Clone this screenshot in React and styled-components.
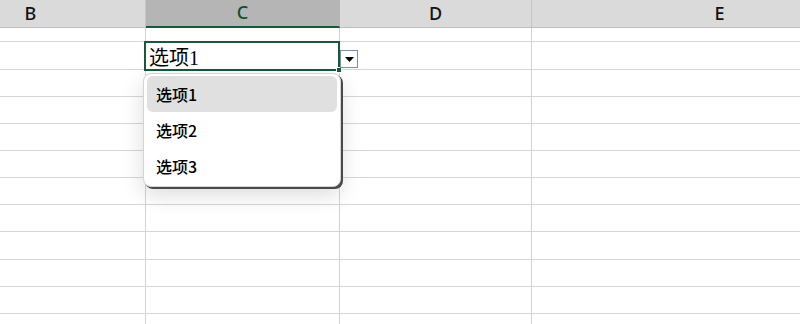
import React from 'react'
import styled, { createGlobalStyle } from 'styled-components'

const GlobalStyle = createGlobalStyle`
  html, body {
    margin: 0;
    padding: 0;
    background: #ffffff;
    overflow: hidden;
  }
  body {
    font-family: "Noto Sans", "Noto Sans CJK SC", sans-serif;
  }
`

const columns = [
  { key: 'B', width: 230 },
  { key: 'C', width: 194 },
  { key: 'D', width: 192 },
  { key: 'E', width: 376 },
]

const Sheet = styled.div`
  width: 800px;
  height: 324px;
  overflow: hidden;
  position: relative;
`

const Grid = styled.div`
  display: grid;
  grid-template-columns: ${({ cols }) => cols};
  margin-left: -84px;
  width: max-content;
`

const HeaderCell = styled.div`
  box-sizing: border-box;
  height: 28px;
  display: flex;
  align-items: center;
  justify-content: center;
  padding-bottom: 2px;
  font-size: 18px;
  font-weight: 500;
  color: ${({ active }) => (active ? '#104f2e' : '#111111')};
  background: ${({ active }) => (active ? '#b5b5b5' : '#dadada')};
  border-right: 1px solid ${({ active }) => (active ? '#b5b5b5' : '#c4c4c4')};
  border-bottom: ${({ active }) => (active ? '2px solid #17593a' : '1px solid #bdbdbd')};
`

const Cell = styled.div`
  box-sizing: border-box;
  height: ${({ h }) => h}px;
  border-right: 1px solid #d2d2d2;
  border-bottom: 1px solid #d6d6d6;
  position: relative;
`

const Selection = styled.div`
  position: absolute;
  left: -2px;
  top: -1px;
  right: -1px;
  bottom: -2px;
  border: 2px solid #17593a;
  display: flex;
  align-items: center;
  padding-left: 3px;
  font-family: "Liberation Serif", "Noto Sans CJK SC", serif;
  font-size: 20px;
  color: #000;
  z-index: 2;
`

const Handle = styled.span`
  position: absolute;
  right: -4px;
  bottom: -4px;
  width: 4px;
  height: 4px;
  background: #17593a;
  border: 1px solid #ffffff;
`

const DropButton = styled.div`
  position: absolute;
  left: calc(100% + 1px);
  top: 8px;
  box-sizing: border-box;
  width: 18px;
  height: 18px;
  background: #ffffff;
  border: 1px solid #7b90ab;
  display: flex;
  align-items: center;
  justify-content: center;
  z-index: 2;
`

const Menu = styled.div`
  position: absolute;
  left: -3px;
  top: 31px;
  width: 198px;
  box-sizing: border-box;
  padding: 2px 3px;
  background: #ffffff;
  border-radius: 8px;
  border: 1px solid #d4d4d4;
  box-shadow: 2px 2px 0 #4a4a4a, 0 8px 22px rgba(0, 0, 0, 0.14);
  z-index: 3;
  display: flex;
  flex-direction: column;
`

const Option = styled.div`
  height: 36px;
  display: flex;
  align-items: center;
  padding-left: 9px;
  border-radius: 6px;
  font-family: "Noto Sans CJK SC", sans-serif;
  font-size: 16px;
  font-weight: 500;
  color: #000;
  background: ${({ selected }) => (selected ? '#e0e0e0' : 'transparent')};
`

const rowHeights = [14, 28, 27, 27, 27, 27, 27, 27, 28, 27, 27, 27]
const options = ['选项1', '选项2', '选项3']

export default function App() {
  return (
    <>
      <GlobalStyle />
      <Sheet>
        <Grid cols={columns.map((c) => `${c.width}px`).join(' ')}>
          {columns.map((c) => (
            <HeaderCell key={c.key} active={c.key === 'C'}>
              {c.key}
            </HeaderCell>
          ))}
          {rowHeights.map((h, r) =>
            columns.map((c) => (
              <Cell key={`${r}-${c.key}`} h={h}>
                {r === 1 && c.key === 'C' && (
                  <>
                    <Selection>
                      选项1
                      <Handle />
                    </Selection>
                    <DropButton>
                      <svg width="9" height="5" viewBox="0 0 9 5">
                        <path d="M0 0 H9 L4.5 5 Z" fill="#000" />
                      </svg>
                    </DropButton>
                    <Menu>
                      {options.map((o, i) => (
                        <Option key={o} selected={i === 0}>
                          {o}
                        </Option>
                      ))}
                    </Menu>
                  </>
                )}
              </Cell>
            ))
          )}
        </Grid>
      </Sheet>
    </>
  )
}
